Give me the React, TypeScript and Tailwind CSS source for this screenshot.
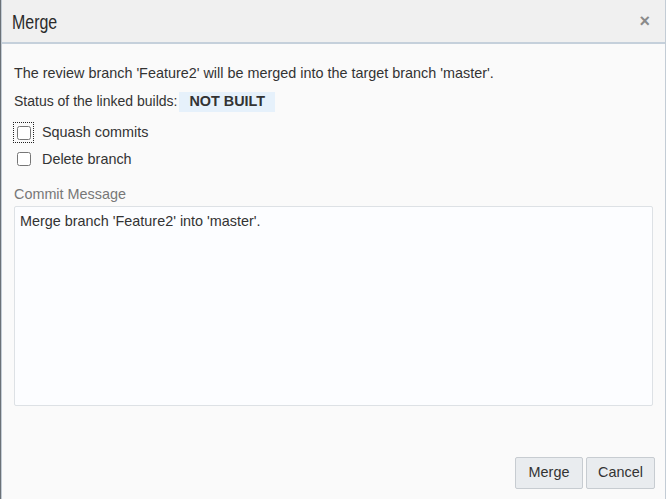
import { useState } from 'react';

export default function App() {
    const [squash, setSquash] = useState(false);
    const [del, setDel] = useState(false);
    const [message, setMessage] = useState("Merge branch 'Feature2' into 'master'.");

    return (
        <div className="flex h-[499px] w-[666px] bg-[#f2f2f2] font-['Liberation_Sans',Arial,sans-serif] text-[14.4px] text-[#333]">
            {/* page behind the dialog */}
            <div className="w-px bg-[#6b7177]" />

            <div className="flex flex-1 flex-col border-x border-[#c3ccd5] bg-[#fafafa]">
                {/* Header */}
                <div className="flex h-[44px] items-center justify-between border-b-2 border-[#c5d0db] bg-[#f0f0f0] pl-[10px] pr-[15px]">
                    <h2 className="origin-left scale-x-[0.76] text-[21px] leading-none text-[#2b2b2b]">Merge</h2>
                    <button className="text-[18px] font-bold leading-none text-[#8a8a8a]" aria-label="Close">
                        ×
                    </button>
                </div>

                {/* Body */}
                <div className="flex flex-1 flex-col px-[12px] pt-[21px]">
                    <p className="leading-[16px]">
                        The review branch 'Feature2' will be merged into the target branch 'master'.
                    </p>

                    <div className="mt-[10px] flex items-center">
                        <span className="text-[14px]">Status of the linked builds:</span>
                        <span className="ml-[2px] flex h-[20px] items-center bg-[#e6f1fb] px-[10px] font-bold text-[#333]">
                            NOT BUILT
                        </span>
                    </div>

                    <label className="mt-[10px] flex items-center">
                        <span className="flex h-[19px] w-[19px] items-center justify-center outline-1 outline-dotted outline-[#222]">
                            <input
                                type="checkbox"
                                checked={squash}
                                onChange={e => setSquash(e.target.checked)}
                                className="h-[14px] w-[14px] accent-[#555]"
                            />
                        </span>
                        <span className="ml-[9px]">Squash commits</span>
                    </label>

                    <label className="mt-[5px] flex items-center">
                        <span className="flex h-[19px] w-[19px] items-center justify-center">
                            <input
                                type="checkbox"
                                checked={del}
                                onChange={e => setDel(e.target.checked)}
                                className="h-[14px] w-[14px] accent-[#555]"
                            />
                        </span>
                        <span className="ml-[9px]">Delete branch</span>
                    </label>

                    <div className="mt-[16px] leading-[16px] text-[#777]">Commit Message</div>

                    <textarea
                        value={message}
                        onChange={e => setMessage(e.target.value)}
                        className="mt-[4px] h-[200px] w-full resize-none rounded-[2px] border border-[#dde1e5] bg-[#fcfdff] px-[5px] py-[6px] text-[14.4px] leading-[16px] text-[#333] outline-none"
                    />

                    {/* Footer */}
                    <div className="mt-auto mb-[10px] -mr-[2px] flex justify-end gap-[3px]">
                        <button className="h-[32px] w-[68px] rounded-[2px] border border-[#c7ccd1] bg-[#e9ecef] text-[14.4px] text-[#333]">
                            Merge
                        </button>
                        <button className="h-[32px] w-[69px] rounded-[2px] border border-[#c7ccd1] bg-[#e9ecef] text-[14.4px] text-[#333]">
                            Cancel
                        </button>
                    </div>
                </div>
            </div>
        </div>
    );
}
